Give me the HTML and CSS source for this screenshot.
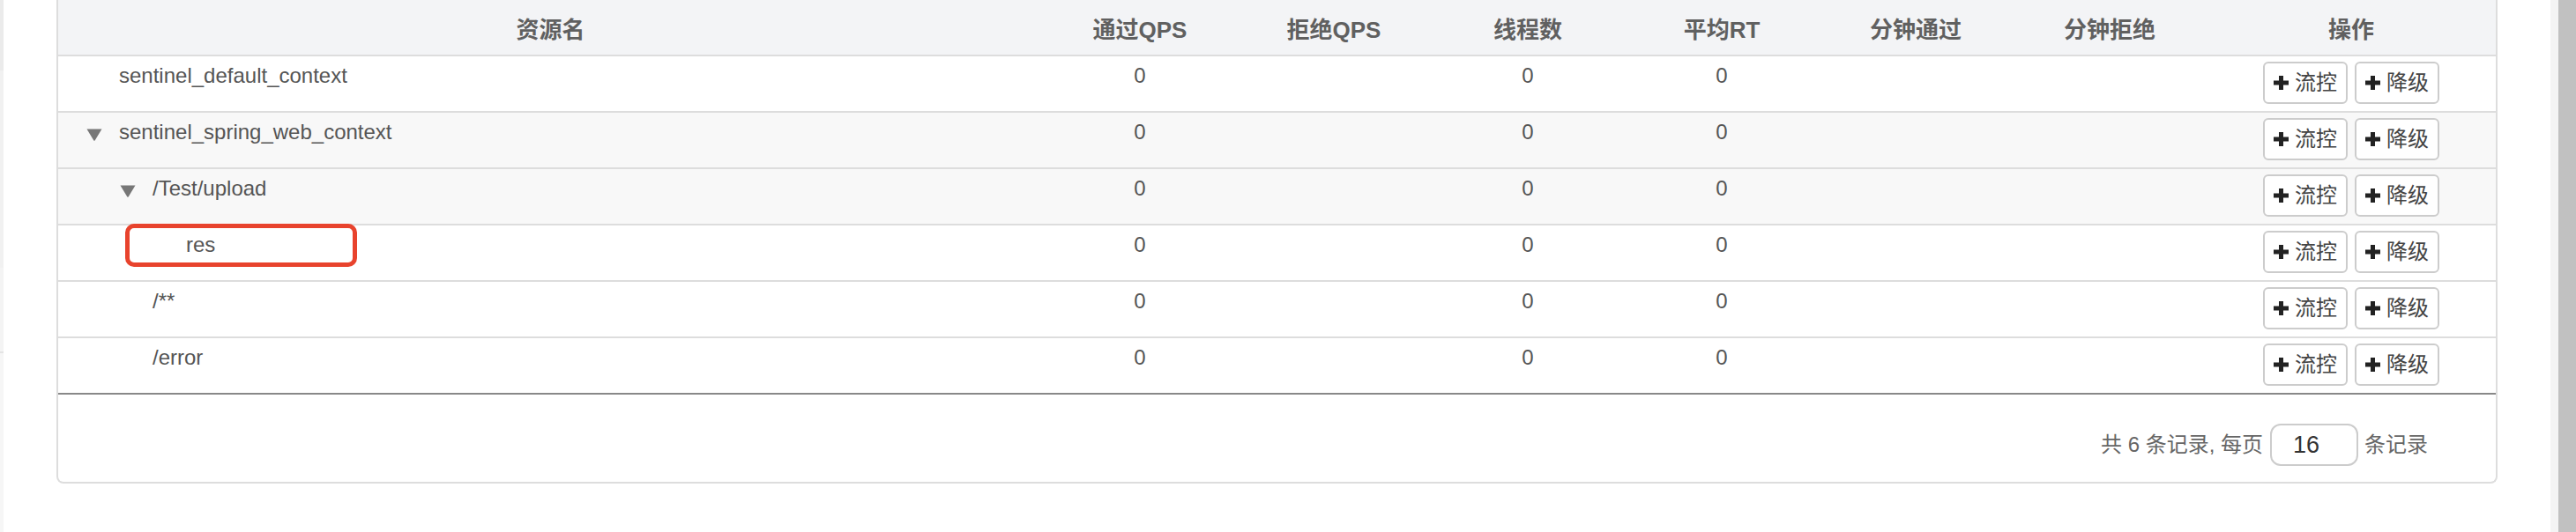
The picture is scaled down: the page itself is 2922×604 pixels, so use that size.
FILE: index.html
```html
<!DOCTYPE html>
<html lang="zh-CN">
<head>
<meta charset="utf-8">
<title>簇点链路</title>
<link rel="stylesheet" href="styles.css">
</head>
<body>
<div class="page">
  <div class="left-edge">
    <div class="seg seg-1"></div>
    <div class="seg seg-2"></div>
    <div class="seg seg-3"></div>
    <div class="seg seg-4"></div>
    <div class="seg seg-5"></div>
  </div>
  <main class="main">
    <div class="panel">
      <div class="thead cols">
        <div class="th">资源名</div>
        <div class="th">通过QPS</div>
        <div class="th">拒绝QPS</div>
        <div class="th">线程数</div>
        <div class="th">平均RT</div>
        <div class="th">分钟通过</div>
        <div class="th">分钟拒绝</div>
        <div class="th">操作</div>
      </div>

      <div class="tr cols">
        <div class="td name level-0"><span class="slot"></span><span class="label">sentinel_default_context</span></div>
        <div class="td num">0</div><div class="td num"></div><div class="td num">0</div><div class="td num">0</div><div class="td num"></div><div class="td num"></div>
        <div class="td ops"><button class="btn"><svg class="plus" viewBox="0 0 17 16"><path d="M6 0h5v5.5h6v5h-6V16H6v-5.5H0v-5h6z"/></svg>流控</button><button class="btn"><svg class="plus" viewBox="0 0 17 16"><path d="M6 0h5v5.5h6v5h-6V16H6v-5.5H0v-5h6z"/></svg>降级</button></div>
      </div>

      <div class="tr cols shaded">
        <div class="td name level-0"><span class="slot"><svg class="caret" viewBox="0 0 18 14"><path d="M0.5 0.5h17L9.8 13.2q-0.8 1-1.6 0z"/></svg></span><span class="label">sentinel_spring_web_context</span></div>
        <div class="td num">0</div><div class="td num"></div><div class="td num">0</div><div class="td num">0</div><div class="td num"></div><div class="td num"></div>
        <div class="td ops"><button class="btn"><svg class="plus" viewBox="0 0 17 16"><path d="M6 0h5v5.5h6v5h-6V16H6v-5.5H0v-5h6z"/></svg>流控</button><button class="btn"><svg class="plus" viewBox="0 0 17 16"><path d="M6 0h5v5.5h6v5h-6V16H6v-5.5H0v-5h6z"/></svg>降级</button></div>
      </div>

      <div class="tr cols shaded">
        <div class="td name level-1"><span class="slot"><svg class="caret" viewBox="0 0 18 14"><path d="M0.5 0.5h17L9.8 13.2q-0.8 1-1.6 0z"/></svg></span><span class="label">/Test/upload</span></div>
        <div class="td num">0</div><div class="td num"></div><div class="td num">0</div><div class="td num">0</div><div class="td num"></div><div class="td num"></div>
        <div class="td ops"><button class="btn"><svg class="plus" viewBox="0 0 17 16"><path d="M6 0h5v5.5h6v5h-6V16H6v-5.5H0v-5h6z"/></svg>流控</button><button class="btn"><svg class="plus" viewBox="0 0 17 16"><path d="M6 0h5v5.5h6v5h-6V16H6v-5.5H0v-5h6z"/></svg>降级</button></div>
      </div>

      <div class="tr cols">
        <div class="td name level-2"><span class="slot"></span><span class="label">res</span><span class="highlight"></span></div>
        <div class="td num">0</div><div class="td num"></div><div class="td num">0</div><div class="td num">0</div><div class="td num"></div><div class="td num"></div>
        <div class="td ops"><button class="btn"><svg class="plus" viewBox="0 0 17 16"><path d="M6 0h5v5.5h6v5h-6V16H6v-5.5H0v-5h6z"/></svg>流控</button><button class="btn"><svg class="plus" viewBox="0 0 17 16"><path d="M6 0h5v5.5h6v5h-6V16H6v-5.5H0v-5h6z"/></svg>降级</button></div>
      </div>

      <div class="tr cols">
        <div class="td name level-1"><span class="slot"></span><span class="label">/**</span></div>
        <div class="td num">0</div><div class="td num"></div><div class="td num">0</div><div class="td num">0</div><div class="td num"></div><div class="td num"></div>
        <div class="td ops"><button class="btn"><svg class="plus" viewBox="0 0 17 16"><path d="M6 0h5v5.5h6v5h-6V16H6v-5.5H0v-5h6z"/></svg>流控</button><button class="btn"><svg class="plus" viewBox="0 0 17 16"><path d="M6 0h5v5.5h6v5h-6V16H6v-5.5H0v-5h6z"/></svg>降级</button></div>
      </div>

      <div class="tr cols last">
        <div class="td name level-1"><span class="slot"></span><span class="label">/error</span></div>
        <div class="td num">0</div><div class="td num"></div><div class="td num">0</div><div class="td num">0</div><div class="td num"></div><div class="td num"></div>
        <div class="td ops"><button class="btn"><svg class="plus" viewBox="0 0 17 16"><path d="M6 0h5v5.5h6v5h-6V16H6v-5.5H0v-5h6z"/></svg>流控</button><button class="btn"><svg class="plus" viewBox="0 0 17 16"><path d="M6 0h5v5.5h6v5h-6V16H6v-5.5H0v-5h6z"/></svg>降级</button></div>
      </div>

      <div class="footer">
        <span class="ftext">共 6 条记录, 每页</span>
        <input class="page-size" type="text" value="16">
        <span class="ftext">条记录</span>
      </div>
    </div>
  </main>
  <div class="scroll">
    <div class="scroll-track"></div>
    <div class="scroll-bar"></div>
  </div>
</div>
</body>
</html>
```

FILE: styles.css
```css
* { box-sizing: border-box; }

html, body {
  margin: 0;
  padding: 0;
  background: #ffffff;
}

body {
  font-family: "Liberation Sans", "Noto Sans CJK SC", sans-serif;
  font-size: 24px;
  color: #555;
}

.page {
  display: flex;
  width: 2922px;
  height: 604px;
  overflow: hidden;
}

/* left sidebar edge */
.left-edge {
  width: 4px;
  display: flex;
  flex-direction: column;
}
.seg-1 { height: 80px; background: #ebebeb; }
.seg-2 { height: 224px; background: #f1f1f1; }
.seg-3 { height: 95px; background: #f4f4f4; }
.seg-4 { height: 2px; background: #e4e4e4; }
.seg-5 { flex: 1; background: #f6f6f6; }

.main {
  flex: 1;
  padding: 0 60px;
}

.panel {
  border: 2px solid #dddddd;
  border-top: none;
  border-radius: 0 0 8px 8px;
  background: #fff;
}

.cols {
  display: grid;
  grid-template-columns: 1117px repeat(6, 220px) 1fr;
}

.thead {
  height: 64px;
  background: #f3f4f6;
  border-bottom: 2px solid #dddddd;
}

.th {
  display: flex;
  align-items: center;
  justify-content: center;
  font-size: 26px;
  font-weight: bold;
  color: #606060;
}

.tr {
  position: relative;
  height: 64px;
  border-bottom: 2px solid #dddddd;
  background: #fff;
}
.tr.shaded { background: #f8f8f8; }
.tr.last { border-bottom-color: #888888; }

.td {
  padding-top: 7px;
  line-height: 30px;
  font-size: 24px;
  color: #555;
}

.num { text-align: center; }

.name {
  position: relative;
  display: flex;
  align-items: flex-start;
  padding-left: 32px;
}
.name.level-1 { padding-left: 70px; }
.name.level-2 { padding-left: 108px; }

.slot {
  width: 37px;
  height: 30px;
  flex: none;
}

.caret {
  display: block;
  width: 18px;
  height: 14px;
  margin-top: 11px;
  fill: #777;
}

.label { white-space: nowrap; }

.highlight {
  position: absolute;
  left: 76px;
  top: -2px;
  width: 263px;
  height: 49px;
  border: 5px solid #e8432d;
  border-radius: 10px;
}

.ops {
  display: flex;
  justify-content: center;
  align-items: flex-start;
  gap: 8px;
  padding-top: 6px;
}

.btn {
  display: inline-flex;
  align-items: center;
  gap: 7px;
  width: 96px;
  height: 48px;
  padding: 0 0 0 10px;
  border: 2px solid #cccccc;
  border-radius: 6px;
  background: #fff;
  font-family: "Liberation Sans", "Noto Sans CJK SC", sans-serif;
  font-size: 24px;
  line-height: 30px;
  color: #444;
}

.plus {
  width: 17px;
  height: 16px;
  flex: none;
  fill: #222;
}

.footer {
  height: 99px;
  display: flex;
  justify-content: flex-end;
  align-items: flex-start;
  padding: 33px 77px 0 0;
}

.ftext {
  font-size: 24px;
  line-height: 48px;
  color: #666;
  white-space: nowrap;
}

.page-size {
  width: 100px;
  height: 48px;
  margin: 0 7px 0 8px;
  padding: 0 0 0 24px;
  border: 2px solid #cccccc;
  border-radius: 12px;
  background: #fff;
  font-family: "Liberation Sans", sans-serif;
  font-size: 27px;
  color: #333;
  outline: none;
}

/* right scrollbar */
.scroll {
  width: 29px;
  display: flex;
}
.scroll-track {
  width: 9px;
  background: #f4f4f4;
}
.scroll-bar {
  flex: 1;
  background: #c1c1c1;
}
```
